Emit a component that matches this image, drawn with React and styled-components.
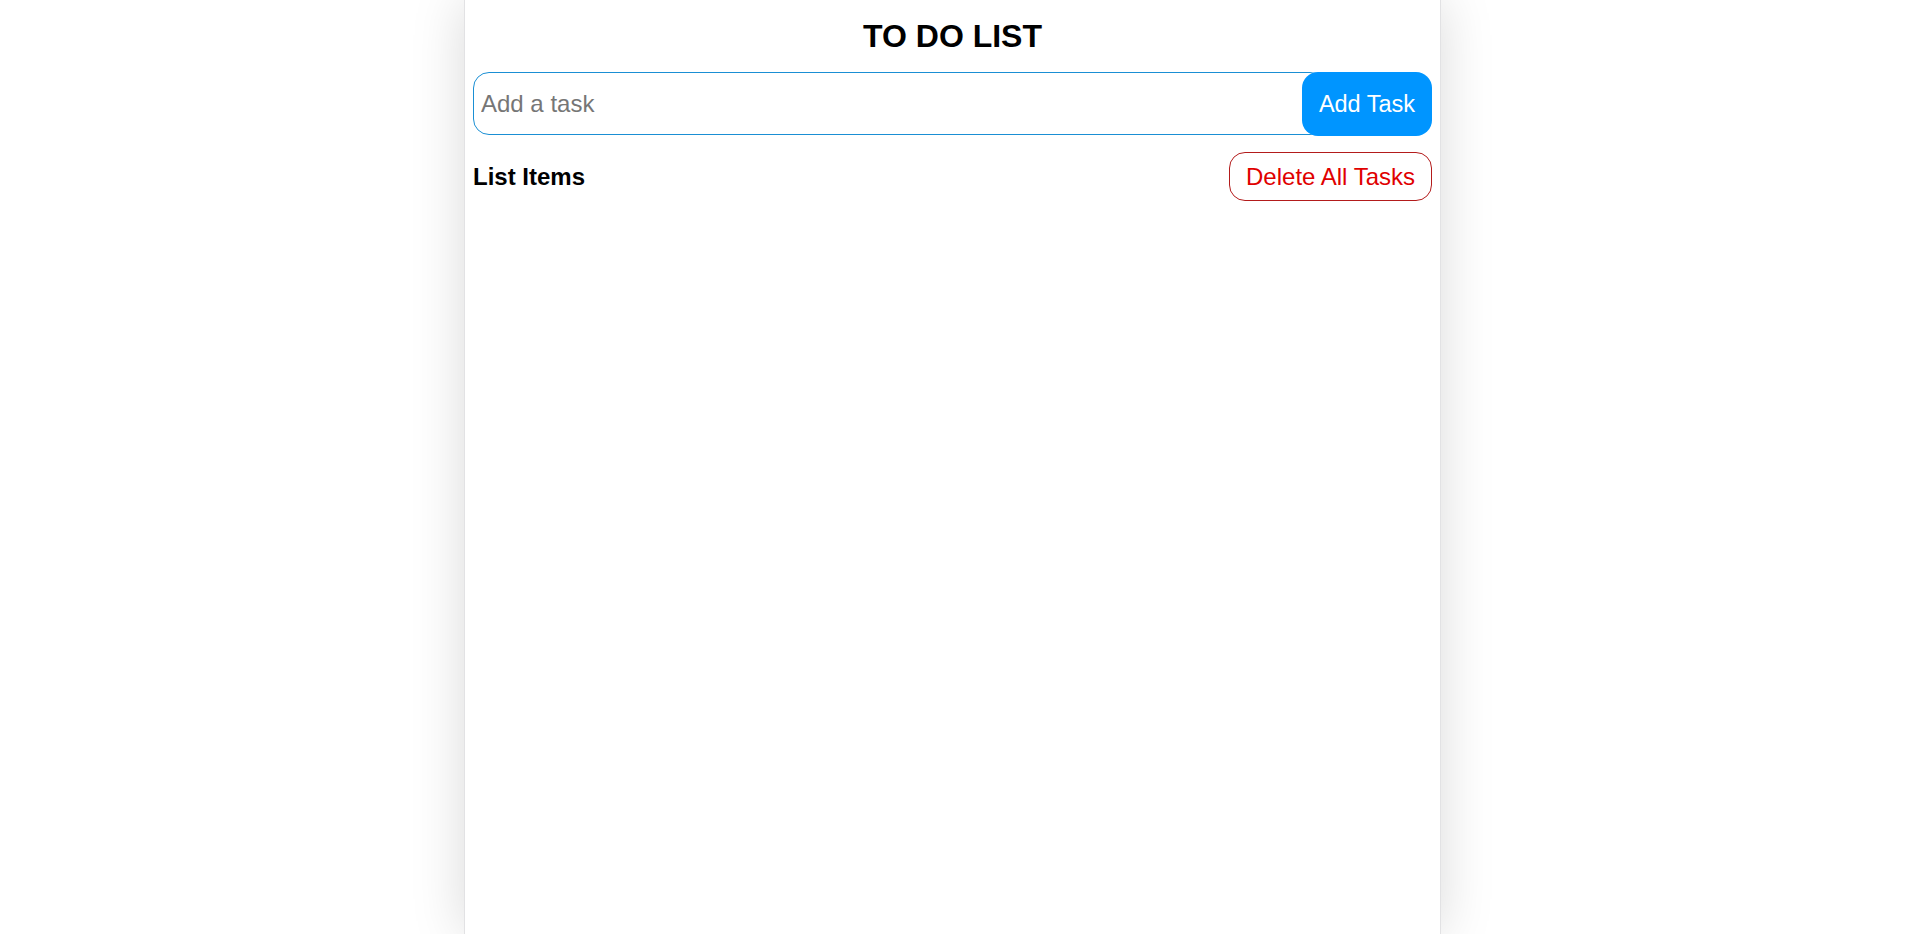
import React, { useState } from 'react';
import styled, { createGlobalStyle } from 'styled-components';

const GlobalStyle = createGlobalStyle`
  body {
    margin: 0;
    background: #fff;
    font-family: "Liberation Sans", Arial, sans-serif;
  }
`;

function App() {
  const [task, setTask] = useState('');
  const [tasks, setTasks] = useState([]);

  const handleAdd = () => {
    if (!task.trim()) return;
    setTasks([...tasks, task.trim()]);
    setTask('');
  };

  return (
    <>
      <GlobalStyle />
      <Card>
        <Title>TO DO LIST</Title>
        <InputRow>
          <TaskInput
            type="text"
            placeholder="Add a task"
            value={task}
            onChange={(e) => setTask(e.target.value)}
          />
          <AddButton type="button" onClick={handleAdd}>Add Task</AddButton>
        </InputRow>
        <ListHeader>
          <ListTitle>List Items</ListTitle>
          <DeleteButton type="button" onClick={() => setTasks([])}>Delete All Tasks</DeleteButton>
        </ListHeader>
        <TaskList>
          {tasks.map((t, i) => (
            <TaskItem key={i}>{t}</TaskItem>
          ))}
        </TaskList>
      </Card>
    </>
  );
}

export default App;

const Card = styled.div`
  box-sizing: border-box;
  width: 977px;
  min-height: 100vh;
  margin: 0 auto;
  padding: 0 8px;
  background: #fff;
  border-left: 1px solid #e2e2e4;
  border-right: 1px solid #e2e2e4;
  box-shadow: 0 0 50px rgba(0, 0, 0, 0.15);
  display: flex;
  flex-direction: column;
`;

const Title = styled.h1`
  margin: 18px 0 17px;
  font-size: 32px;
  font-weight: bold;
  text-align: center;
  color: #000;
`;

const InputRow = styled.div`
  display: flex;
  align-items: stretch;
  height: 64px;
`;

const TaskInput = styled.input`
  flex: 1;
  min-width: 0;
  box-sizing: border-box;
  height: 63px;
  padding: 0 7px;
  margin-right: -24px;
  border: 1px solid #1a8fd4;
  border-radius: 16px;
  font-family: "Liberation Sans", Arial, sans-serif;
  font-size: 24px;
  color: #222;
  outline: none;

  &::placeholder {
    color: #767676;
  }
`;

const AddButton = styled.button`
  width: 130px;
  height: 64px;
  border: none;
  border-radius: 16px;
  background: #0095ff;
  color: #fff;
  font-family: "Liberation Sans", Arial, sans-serif;
  font-size: 23.5px;
  cursor: pointer;
`;

const ListHeader = styled.div`
  display: flex;
  align-items: center;
  justify-content: space-between;
  margin-top: 16px;
`;

const ListTitle = styled.h3`
  margin: 0;
  font-size: 24px;
  font-weight: bold;
  color: #000;
`;

const DeleteButton = styled.button`
  box-sizing: border-box;
  height: 49px;
  padding: 0 16px;
  border: 1px solid #b31b1b;
  border-radius: 16px;
  background: #fff;
  color: #e00000;
  font-family: "Liberation Sans", Arial, sans-serif;
  font-size: 24px;
  cursor: pointer;
`;

const TaskList = styled.ul`
  list-style: none;
  margin: 12px 0 0;
  padding: 0;
`;

const TaskItem = styled.li`
  padding: 10px 0;
  font-size: 22px;
  border-bottom: 1px solid #eee;
`;
